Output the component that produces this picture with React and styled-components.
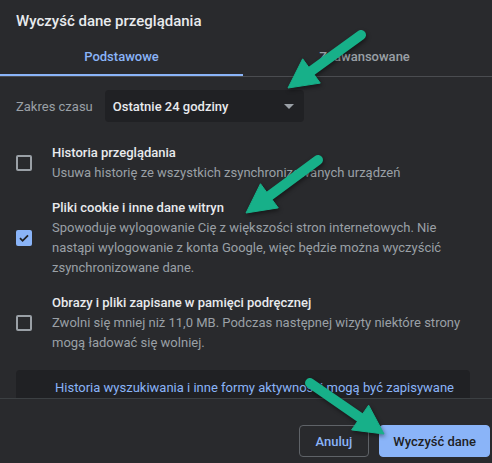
import React from "react";
import styled, { createGlobalStyle } from "styled-components";

const GlobalStyle = createGlobalStyle`
  html, body {
    margin: 0;
    padding: 0;
    background: #292a2d;
  }
  body {
    font-family: Roboto, "Liberation Sans", Arial, sans-serif;
    -webkit-font-smoothing: antialiased;
  }
`;

const Page = styled.div`
  position: relative;
  width: 492px;
  height: 463px;
  overflow: hidden;
`;

const Dialog = styled.div`
  display: flex;
  flex-direction: column;
  width: 100%;
  height: 100%;
  background: #292a2d;
  color: #e8eaed;
`;

const Title = styled.h1`
  margin: 0;
  padding: 11px 16px 5px;
  font-size: 15px;
  line-height: 20px;
  font-weight: 500;
  color: #e8eaed;
`;

const TabList = styled.div`
  display: flex;
  padding-right: 6px;
  border-bottom: 1px solid #4a4c50;
`;

const Tab = styled.div`
  flex: 1;
  height: 40px;
  display: flex;
  align-items: center;
  justify-content: center;
  font-size: 13px;
  font-weight: 500;
  color: ${(p) => (p.$active ? "#8ab4f8" : "#9aa0a6")};
  box-shadow: ${(p) => (p.$active ? "inset 0 -2px 0 #8ab4f8" : "none")};
`;

const Body = styled.div`
  flex: 1;
  overflow: hidden;
  padding: 13px 22px 0 16px;
`;

const TimeRow = styled.div`
  display: flex;
  align-items: center;
  gap: 12px;
`;

const FieldLabel = styled.span`
  font-size: 13px;
  color: #9aa0a6;
`;

const Select = styled.div`
  width: 199px;
  height: 32px;
  box-sizing: border-box;
  padding: 0 10px 0 8px;
  display: flex;
  align-items: center;
  justify-content: space-between;
  background: #202124;
  border-radius: 4px;
  font-size: 13px;
  font-weight: 500;
  color: #e8eaed;
`;

const Caret = styled.span`
  width: 0;
  height: 0;
  border-left: 5px solid transparent;
  border-right: 5px solid transparent;
  border-top: 5px solid #9aa0a6;
`;

const OptionList = styled.div`
  display: flex;
  flex-direction: column;
  gap: 15px;
  margin-top: 21px;
`;

const OptionRow = styled.label`
  display: flex;
  align-items: center;
  gap: 20px;
`;

const Box = styled.span`
  flex: 0 0 auto;
  width: 16px;
  height: 16px;
  box-sizing: border-box;
  border-radius: 2px;
  border: ${(p) => (p.$checked ? "none" : "2px solid #9aa0a6")};
  background: ${(p) => (p.$checked ? "#8ab4f8" : "transparent")};
  display: flex;
  align-items: center;
  justify-content: center;
`;

const OptionText = styled.div`
  display: flex;
  flex-direction: column;
  font-size: 13px;
  line-height: 20px;
`;

const OptionTitle = styled.span`
  font-weight: 500;
  color: #e8eaed;
`;

const OptionDesc = styled.span`
  color: #9aa0a6;
`;

const InfoBox = styled.div`
  margin-top: 17px;
  padding: 8px 16px 10px 39px;
  background: #202124;
  border-radius: 4px;
  font-size: 13px;
  line-height: 20px;
  color: #8ab4f8;
`;

const Footer = styled.div`
  display: flex;
  justify-content: flex-end;
  gap: 10px;
  padding: 26px 2px 6px;
  border-top: 1px solid #3c4043;
`;

const Button = styled.button`
  height: 32px;
  padding: 0 ${(p) => (p.$primary ? "13px" : "16px")};
  border-radius: 4px;
  border: 1px solid ${(p) => (p.$primary ? "#8ab4f8" : "#5f6368")};
  background: ${(p) => (p.$primary ? "#8ab4f8" : "transparent")};
  color: ${(p) => (p.$primary ? "#202124" : "#8ab4f8")};
  font-family: inherit;
  font-size: 13px;
  font-weight: 500;
`;

const Overlay = styled.svg`
  position: absolute;
  left: 0;
  top: 0;
  pointer-events: none;
  filter: drop-shadow(1px 2px 2px rgba(0, 0, 0, 0.45));
`;

const ARROW = "#17b089";

const Arrow = ({ from, to }) => {
  const dx = to[0] - from[0];
  const dy = to[1] - from[1];
  const len = Math.hypot(dx, dy);
  const ux = dx / len;
  const uy = dy / len;
  const headLen = 29;
  const half = 15;
  const bx = to[0] - ux * headLen;
  const by = to[1] - uy * headLen;
  const pts = [
    [to[0], to[1]],
    [bx - uy * half, by + ux * half],
    [bx + uy * half, by - ux * half],
  ]
    .map((p) => p.join(","))
    .join(" ");
  return (
    <g>
      <line
        x1={from[0]}
        y1={from[1]}
        x2={bx + ux * 4}
        y2={by + uy * 4}
        stroke={ARROW}
        strokeWidth="10"
        strokeLinecap="round"
      />
      <polygon points={pts} fill={ARROW} strokeLinejoin="round" stroke={ARROW} strokeWidth="1" />
    </g>
  );
};

const Check = () => (
  <svg width="12" height="12" viewBox="0 0 12 12">
    <path d="M2 6.2l2.6 2.6L10 3.4" fill="none" stroke="#202124" strokeWidth="1.8" />
  </svg>
);

const options = [
  {
    title: "Historia przeglądania",
    desc: "Usuwa historię ze wszystkich zsynchronizowanych urządzeń",
    checked: false,
  },
  {
    title: "Pliki cookie i inne dane witryn",
    desc: "Spowoduje wylogowanie Cię z większości stron internetowych. Nie nastąpi wylogowanie z konta Google, więc będzie można wyczyścić zsynchronizowane dane.",
    checked: true,
  },
  {
    title: "Obrazy i pliki zapisane w pamięci podręcznej",
    desc: "Zwolni się mniej niż 11,0 MB. Podczas następnej wizyty niektóre strony mogą ładować się wolniej.",
    checked: false,
  },
];

export default function App() {
  return (
    <Page>
      <GlobalStyle />
      <Dialog>
        <Title>Wyczyść dane przeglądania</Title>
        <TabList>
          <Tab $active>Podstawowe</Tab>
          <Tab>Zaawansowane</Tab>
        </TabList>
        <Body>
          <TimeRow>
            <FieldLabel>Zakres czasu</FieldLabel>
            <Select>
              Ostatnie 24 godziny
              <Caret />
            </Select>
          </TimeRow>
          <OptionList>
            {options.map((o) => (
              <OptionRow key={o.title}>
                <Box $checked={o.checked}>{o.checked && <Check />}</Box>
                <OptionText>
                  <OptionTitle>{o.title}</OptionTitle>
                  <OptionDesc>{o.desc}</OptionDesc>
                </OptionText>
              </OptionRow>
            ))}
          </OptionList>
          <InfoBox>
            Historia wyszukiwania i inne formy aktywności mogą być zapisywane na
            Twoim koncie Google, gdy jesteś zalogowany.
          </InfoBox>
        </Body>
        <Footer>
          <Button>Anuluj</Button>
          <Button $primary>Wyczyść dane</Button>
        </Footer>
      </Dialog>
      <Overlay width="492" height="463" viewBox="0 0 492 463">
        <Arrow from={[361, 35]} to={[288, 88]} />
        <Arrow from={[318, 160]} to={[246, 213]} />
        <Arrow from={[310, 383]} to={[384, 434]} />
      </Overlay>
    </Page>
  );
}
